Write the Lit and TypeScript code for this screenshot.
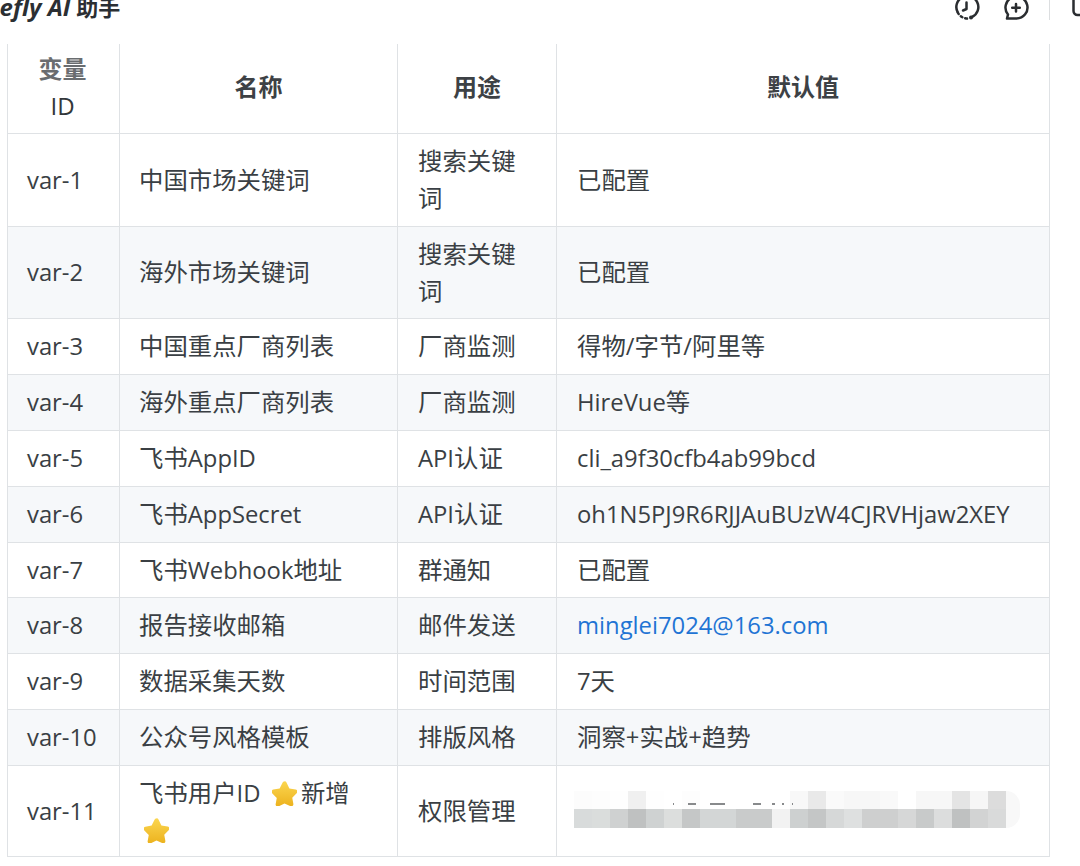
import { LitElement, html, css } from "lit";
import { customElement } from "lit/decorators.js";

type Row = { id: string; name: unknown; use: unknown; val: unknown; cls?: string };

const star = () => html`<svg class="star" viewBox="2 2 20 20" aria-hidden="true">
  <defs><linearGradient id="sg" x1="0" y1="0" x2="0" y2="1"><stop offset="0" stop-color="#fbd650"/><stop offset="1" stop-color="#ecb21e"/></linearGradient></defs>
  <path d="M12 2.200c.7 0 1.300.4 1.600 1l2.300 4.700 5 .8c1.400.2 1.900 1.900 1 2.900l-3.700 3.700.9 5.100c.2 1.300-1.200 2.300-2.400 1.700L12 20l-4.700 2.300c-1.200.6-2.600-.4-2.400-1.700l.9-5.100-3.700-3.700c-.9-1-.4-2.700 1-2.900l5-.8 2.300-4.700c.3-.6.900-1 1.600-1z" fill="url(#sg)"/>
</svg>`;

/* CJK runs are a touch larger than Latin runs in the reference's font pairing */
const mix = (t: string) => t.split(/([\u4e00-\u9fff]+)/).map((p, i) => (i % 2 ? html`<span class="han">${p}</span>` : p));

const lower = ["d8dbdb","dadddc","cfd1d1","bfc1c1","cfd2d2","dcdedd","c5c7c7","d3d6d6","d3d6d6","c9cbcb","c9cbcb","f2f2f2","cdd0d0","c4c6c6","d6d8d8","dee0e0","cecfcf","cecfcf","d6d7d7","c8caca","dcdddd","bfc1c1","d2d3d3","d9dada"];
const upper = ["fcfcfc","fdfdfd","fefefe","f0f0f0","fefefe","ffffff","fdfdfd","ffffff","ffffff","ffffff","ffffff","ffffff","f8f8f8","e9e9e9","fafafa","f7f7f7","f7f7f7","f9f9f9","ffffff","f7f7f7","f7f7f7","e4e4e4","f6f6f6","dcdcdc"];
const marks = [[99, 1], [114, 8], [136, 15], [179, 8], [198, 3], [208, 2], [218, 1]];

const mosaic = html`<div class="mosaic">
  <div class="mgrid">
    <div class="mrow">${upper.map((c) => html`<i style="background:#${c}"></i>`)}
      ${marks.map(([x, w]) => html`<u style="left:${x}px;width:${w}px"></u>`)}</div>
    <div class="mrow">${lower.map((c) => html`<i style="background:#${c}"></i>`)}</div>
  </div>
  <b class="cap"></b>
</div>`;

const rows: Row[] = [
  { id: "var-1", name: "中国市场关键词", use: "搜索关键词", val: "已配置" },
  { id: "var-2", name: "海外市场关键词", use: "搜索关键词", val: "已配置" },
  { id: "var-3", name: "中国重点厂商列表", use: "厂商监测", val: "得物/字节/阿里等" },
  { id: "var-4", name: "海外重点厂商列表", use: "厂商监测", val: "HireVue等" },
  { id: "var-5", name: "飞书AppID", use: "API认证", val: "cli_a9f30cfb4ab99bcd" },
  { id: "var-6", name: "飞书AppSecret", use: "API认证", val: "oh1N5PJ9R6RJJAuBUzW4CJRVHjaw2XEY" },
  { id: "var-7", name: "飞书Webhook地址", use: "群通知", val: "已配置" },
  { id: "var-8", name: "报告接收邮箱", use: "邮件发送", val: html`<a href="#">minglei7024@163.com</a>` },
  { id: "var-9", name: "数据采集天数", use: "时间范围", val: "7天" },
  { id: "var-10", name: "公众号风格模板", use: "排版风格", val: "洞察+实战+趋势" },
  { id: "var-11", name: html`${mix("飞书用户ID")} ${star()} ${mix("新增")} ${star()}`, use: "权限管理", val: mosaic },
];

const cell = (v: unknown) => (typeof v === "string" ? mix(v) : v);

@customElement("app-root")
export class AppRoot extends LitElement {
  static styles = css`
    :host { display: block; width: 1080px; height: 866px; overflow: hidden; background: #fff;
      font-family: "Open Sans", "Noto Sans CJK SC", sans-serif; color: #3a3f44; }
    .top { height: 44px; display: flex; align-items: flex-start; overflow: hidden; }
    .title { margin: -8px 0 0 -15px; font: 700 22px/30px "Open Sans", "Noto Sans CJK SC", sans-serif; color: #2b2f33; white-space: nowrap; }
    .title em { font-style: italic; font-size: 24px; }
    .tools { margin-left: auto; display: flex; align-items: flex-start; }
    .tools svg { display: block; width: 30px; height: 30px; margin-top: -7px; fill: none; stroke: #2a2d30; stroke-width: 2.500; stroke-linecap: round; stroke-linejoin: round; }
    .tools .t1 { margin-right: 20px; }
    .tools .dot { fill: #2a2d30; stroke: none; }
    .sep { width: 1px; height: 20px; background: #dcdee0; margin: 0 22px 0 18px; }
    .tools .doc { width: 8px; height: 24px; margin-top: -3px; overflow: visible; }
    table { margin-left: 7px; width: 1043px; table-layout: fixed; border-collapse: collapse; font-size: 23.800px; line-height: 36.800px; }
    .c1 { width: 112px; } .c2 { width: 278px; } .c3 { width: 159px; } .c4 { width: 493px; }
    th, td { border: 1px solid #dfe2e5; padding: 9px 20px; text-align: left; font-weight: 400; vertical-align: middle; word-break: break-word; }
    td:nth-child(-n + 2) { padding-left: 19px; }
    tbody tr:last-child td { padding-bottom: 7.800px; }
    .han { font-size: 24.400px; }
    th { border-top: none; text-align: center; font-size: 24px; font-weight: 700; color: #3d4145; padding: 7px 20px 8.600px; }
    th:first-child { padding-left: 19px; padding-right: 21px; }
    th .gr { color: #6a6d70; font-weight: 700; }
    th .idt { font-weight: 400; color: #33373a; }
    tbody tr:nth-child(even) { background: #f6f8fa; }
    a { color: #1f74d4; text-decoration: none; }
    .star { display: inline-block; width: 25px; height: 25px; vertical-align: -4px; margin: 0 -2px 0 5px; }
    td.vc { position: relative; }
    .mosaic { position: absolute; left: 17px; top: 25px; display: flex; }
    .mgrid { display: flex; flex-direction: column; }
    .mrow { display: flex; height: 18.500px; position: relative; }
    .mrow i { display: block; width: 18px; }
    .mrow u { position: absolute; top: 12px; height: 2px; background: #55585b; opacity: .7; }
    .cap { display: block; width: 14px; background: #f8f8f8; border-radius: 0 18px 18px 0; }
  `;

  render() {
    return html`
      <div class="top">
        <div class="title"><em>Refly AI</em> 助手</div>
        <div class="tools">
          <svg class="t1" viewBox="0 0 30 30">
            <path d="M6.800 19.500A11 11 0 1 1 21 24" />
            <path d="M6.800 19.500A11 11 0 0 0 18 25.500" stroke-dasharray="1.800 3" />
            <circle class="dot" cx="20" cy="24.500" r="2" />
            <path d="M15.500 9.500v6.500l-3.500 1.500" />
          </svg>
          <svg viewBox="0 0 30 30">
            <path d="M6 25.500h9.500a11 11 0 1 0-8.500-4z" />
            <path d="M15 11v7.500M11.200 14.700h7.600" />
          </svg>
          <div class="sep"></div>
          <svg class="doc" viewBox="0 0 8 24"><rect x="1.500" y="-6" width="18" height="24" rx="4" /></svg>
        </div>
      </div>
      <table>
        <colgroup><col class="c1" /><col class="c2" /><col class="c3" /><col class="c4" /></colgroup>
        <thead>
          <tr>
            <th><span class="gr">变量</span><br /><span class="idt">ID</span></th>
            <th>名称</th>
            <th>用途</th>
            <th>默认值</th>
          </tr>
        </thead>
        <tbody>
          ${rows.map((r) => html`<tr>
            <td>${r.id}</td><td>${cell(r.name)}</td><td>${cell(r.use)}</td><td class="vc">${cell(r.val)}</td>
          </tr>`)}
        </tbody>
      </table>
    `;
  }
}
